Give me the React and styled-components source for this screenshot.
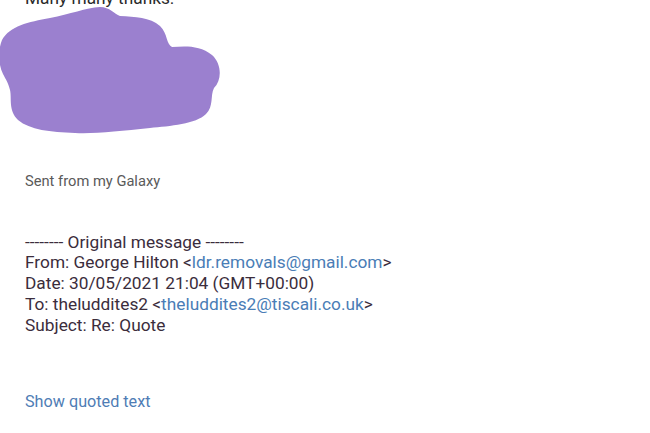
import styled, { createGlobalStyle } from "styled-components";

const Global = createGlobalStyle`
  html, body {
    margin: 0;
    padding: 0;
    background: #ffffff;
    overflow: hidden;
  }
  body {
    font-family: Roboto, "Noto Sans", sans-serif;
  }
`;

const Mail = styled.main`
  width: 650px;
  height: 433px;
  padding-left: 25px;
  box-sizing: border-box;
  overflow: hidden;
`;

const Line = styled.div`
  font-size: 17.3px;
  line-height: 20.7px;
  color: #3b2d3c;
  white-space: nowrap;
`;

const Thanks = styled(Line)`
  margin-top: -12px;
  color: #2a2a2a;
`;

const Scribble = styled.svg`
  display: block;
  margin-left: -25px;
  margin-top: -9px;
`;

const Signature = styled.div`
  margin-top: 32px;
  font-size: 14.7px;
  line-height: 18px;
  color: #5a5a5a;
`;

const Quoted = styled.section`
  margin-top: 42px;
`;

const Addr = styled.span`
  color: #4a7db6;
`;

const ShowMore = styled.div`
  margin-top: 57px;
  font-size: 16.2px;
  line-height: 20px;
  color: #4f7db5;
`;

function Redaction() {
  return (
    <Scribble width="225" height="140" viewBox="0 0 225 140">
      <path
        d="M2 40 C10 26 28 22 50 18 C70 14 86 8 100 7 C110 7 114 14 120 16
           C135 17 150 17 160 26 C168 34 166 44 172 47 C185 46 200 45 212 55
           C222 64 222 80 214 88 C210 96 214 106 206 114 C196 124 170 126 150 128
           C120 131 95 134 75 133 C50 132 30 130 18 120 C8 110 12 98 10 90
           C8 82 6 80 3 74 C-2 64 -2 50 2 40 Z"
        fill="#9b80cf"
      />
    </Scribble>
  );
}

export default function App() {
  return (
    <>
      <Global />
      <Mail>
        <Thanks>Many many thanks.</Thanks>
        <Redaction />
        <Signature>Sent from my Galaxy</Signature>
        <Quoted>
          <Line>-------- Original message --------</Line>
          <Line>
            From: George Hilton &lt;<Addr>ldr.removals@gmail.com</Addr>&gt;
          </Line>
          <Line>Date: 30/05/2021 21:04 (GMT+00:00)</Line>
          <Line>
            To: theluddites2 &lt;<Addr>theluddites2@tiscali.co.uk</Addr>&gt;
          </Line>
          <Line>Subject: Re: Quote</Line>
        </Quoted>
        <ShowMore>Show quoted text</ShowMore>
      </Mail>
    </>
  );
}
